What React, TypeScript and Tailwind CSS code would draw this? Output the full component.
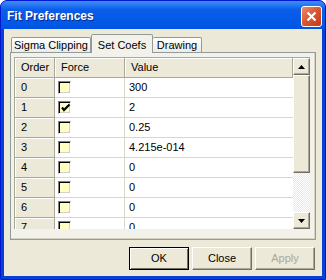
import { Fragment } from "react";

const rows = [
  { order: "0", force: false, value: "300" },
  { order: "1", force: true, value: "2" },
  { order: "2", force: false, value: "0.25" },
  { order: "3", force: false, value: "4.215e-014" },
  { order: "4", force: false, value: "0" },
  { order: "5", force: false, value: "0" },
  { order: "6", force: false, value: "0" },
  { order: "7", force: false, value: "0" },
];

const CheckBox = ({ checked }: { checked: boolean }) => (
  <div className="relative h-[13px] w-[13px] border border-t-[#808080] border-l-[#808080] border-r-white border-b-white bg-[#FFFFC4] shadow-[inset_1px_1px_0_#000,inset_-1px_-1px_0_#D4D0C8]">
    {checked && (
      <svg className="absolute left-[1px] top-[1px]" width="11" height="11" viewBox="0 0 11 11">
        <path d="M2 4.5 L4 7 L9.5 1.5" fill="none" stroke="#000" strokeWidth="2.2" />
      </svg>
    )}
  </div>
);

const ArrowButton = ({ up }: { up: boolean }) => (
  <div className="flex h-[17px] w-[17px] shrink-0 items-center justify-center border border-t-white border-l-white border-r-[#716F64] border-b-[#716F64] bg-[#ECE9D8] shadow-[inset_-1px_-1px_0_#ACA899]">
    <svg width="7" height="4" viewBox="0 0 7 4">
      <path d={up ? "M0 4 L3.5 0 L7 4 Z" : "M0 0 L7 0 L3.5 4 Z"} fill="#000" />
    </svg>
  </div>
);

const DialogButton = ({ label, primary, disabled }: { label: string; primary?: boolean; disabled?: boolean }) => (
  <div
    className={
      "flex h-[23px] w-[60px] items-center justify-center bg-[#ECE9D8] text-[11px] " +
      (primary
        ? "border border-black shadow-[inset_1px_1px_0_#fff,inset_-1px_-1px_0_#716F64]"
        : "border border-t-white border-l-white border-r-[#716F64] border-b-[#716F64] shadow-[inset_-1px_-1px_0_#ACA899]") +
      (disabled ? " text-[#ACA899]" : " text-black")
    }
  >
    {label}
  </div>
);

const App = () => {
  return (
    <div className="h-[280px] w-[326px] bg-white font-['Liberation_Sans',Arial,sans-serif]">
      <div className="flex h-full w-full flex-col overflow-hidden rounded-t-[7px] border border-[#0019CF] bg-[#0841D8]">
        <div className="flex h-[28px] shrink-0 items-center justify-between bg-gradient-to-b from-[#3E8DF8] via-[#0A5EEA] via-30% to-[#0054E3] pl-[6px] pr-[3px] pt-[2px]">
          <span className="text-[12px] font-bold text-white [text-shadow:1px_1px_0_#0A2A8A]">Fit Preferences</span>
          <div className="flex h-[21px] w-[21px] items-center justify-center rounded-[3px] border border-white bg-gradient-to-br from-[#E88B6B] via-[#D9542E] to-[#C2381A]">
            <svg width="11" height="11" viewBox="0 0 11 11">
              <path d="M1.5 1.5 L9.5 9.5 M9.5 1.5 L1.5 9.5" stroke="#fff" strokeWidth="2.2" />
            </svg>
          </div>
        </div>

        <div className="mx-[3px] mb-[3px] flex flex-1 flex-col bg-[#ECE9D8] px-[6px] pt-[5px] text-[11px]">
          <div className="flex h-[18px] items-end pl-[1px]">
            <div className="flex h-[15px] w-[80px] items-center justify-center rounded-t-[2px] border border-b-0 border-[#919B9C] bg-gradient-to-b from-white to-[#ECEBE6] pt-[1px]">
              Sigma Clipping
            </div>
            <div className="relative z-10 -mb-[1px] flex h-[19px] w-[62px] items-start justify-center rounded-t-[2px] border border-b-0 border-[#919B9C] bg-[#F2F1EA] pt-[2px]">
              Set Coefs
            </div>
            <div className="flex h-[15px] w-[49px] items-center justify-center rounded-t-[2px] border border-b-0 border-l-0 border-[#919B9C] bg-gradient-to-b from-white to-[#ECEBE6] pt-[1px]">
              Drawing
            </div>
          </div>

          <div className="flex h-[188px] flex-col border border-[#919B9C] bg-[#F2F1EA] pl-[3px] pr-[5px] pt-[4px] shadow-[inset_-1px_-1px_0_#D6D3C4]">
            <div className="flex h-[172px] overflow-hidden border-l border-t border-[#ACA899]">
              <div className="flex w-[278px] flex-col overflow-hidden bg-white">
                <div className="grid h-[20px] shrink-0 grid-cols-[40px_70px_1fr]">
                  {["Order", "Force", "Value"].map((h) => (
                    <div
                      key={h}
                      className="flex items-center border-b border-r border-[#ACA899] bg-[#ECE9D8] pl-[6px] shadow-[inset_1px_1px_0_#fff]"
                    >
                      {h}
                    </div>
                  ))}
                </div>
                <div className="grid grid-cols-[40px_70px_1fr] auto-rows-[20px]">
                  {rows.map((r) => (
                    <Fragment key={r.order}>
                      <div className="flex items-center border-b border-r border-[#ACA899] bg-[#ECE9D8] pl-[6px] shadow-[inset_1px_1px_0_#fff]">
                        {r.order}
                      </div>
                      <div className="flex items-center border-b border-r border-[#D8D6CE] pl-[3px]">
                        <CheckBox checked={r.force} />
                      </div>
                      <div className="flex items-center border-b border-[#D8D6CE] pl-[4px]">{r.value}</div>
                    </Fragment>
                  ))}
                </div>
              </div>
              <div className="flex w-[17px] flex-col">
                <ArrowButton up />
                <div className="h-[98px] shrink-0 border border-t-white border-l-white border-r-[#716F64] border-b-[#716F64] bg-[#ECE9D8] shadow-[inset_-1px_-1px_0_#ACA899]" />
                <div className="flex-1 bg-[repeating-conic-gradient(#ECE9D8_0_25%,#fff_0_50%)] bg-[length:2px_2px]" />
                <ArrowButton up={false} />
              </div>
            </div>
          </div>

          <div className="mt-[7px] flex justify-end gap-[3px] pr-[1px]">
            <DialogButton label="OK" primary />
            <DialogButton label="Close" />
            <DialogButton label="Apply" disabled />
          </div>
        </div>
      </div>
    </div>
  );
};

export default App;
